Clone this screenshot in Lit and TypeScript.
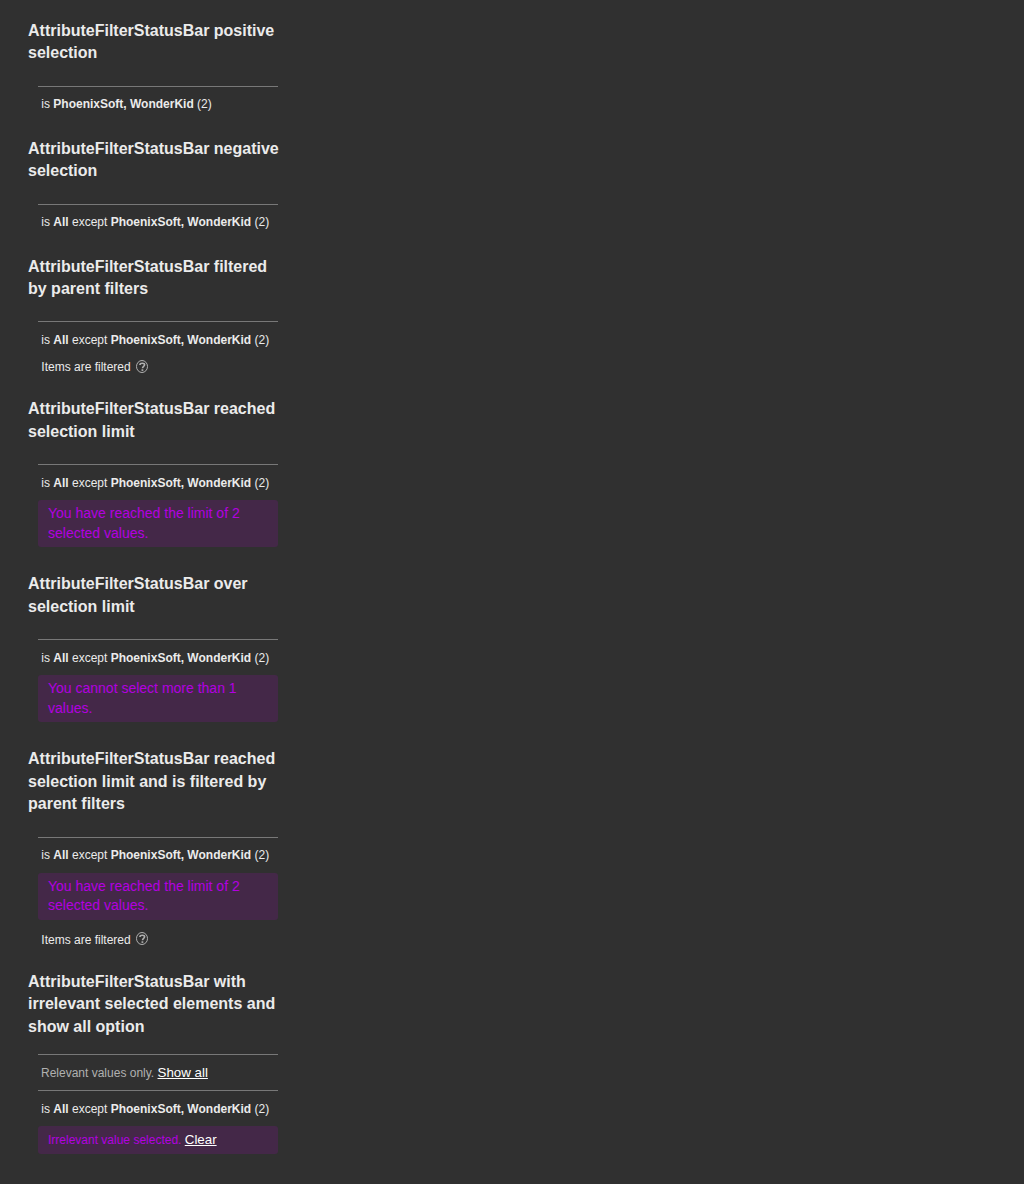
import { LitElement, html, css, svg, nothing } from "lit";
import { customElement, property } from "lit/decorators.js";

interface StatusExample {
  title: string;
  negative?: boolean;
  limit?: string;
  filtered?: boolean;
  irrelevant?: boolean;
}

const EXAMPLES: StatusExample[] = [
  { title: "AttributeFilterStatusBar positive selection" },
  { title: "AttributeFilterStatusBar negative selection", negative: true },
  { title: "AttributeFilterStatusBar filtered by parent filters", negative: true, filtered: true },
  {
    title: "AttributeFilterStatusBar reached selection limit",
    negative: true,
    limit: "You have reached the limit of 2 selected values.",
  },
  {
    title: "AttributeFilterStatusBar over selection limit",
    negative: true,
    limit: "You cannot select more than 1 values.",
  },
  {
    title: "AttributeFilterStatusBar reached selection limit and is filtered by parent filters",
    negative: true,
    limit: "You have reached the limit of 2 selected values.",
    filtered: true,
  },
  {
    title: "AttributeFilterStatusBar with irrelevant selected elements and show all option",
    negative: true,
    irrelevant: true,
  },
];

const helpIcon = svg`
  <ellipse cx="6" cy="6.5" rx="5.5" ry="6" stroke-width="1" />
  <path d="M3.9 5C3.9 3.7 4.8 3.2 6.2 3.2C7.7 3.2 8.6 3.8 8.6 4.8C8.6 6.3 6.5 6.4 6.5 8.2" stroke-width="1.6" />
  <path d="M6.4 9.3V10.9" stroke-width="1.8" />
`;

@customElement("status-bar")
export class StatusBar extends LitElement {
  @property({ attribute: false }) example!: StatusExample;

  static styles = css`
    :host {
      display: block;
      padding: 0 10px;
    }
    .row {
      box-sizing: border-box;
      height: 36px;
      padding: 8.6px 0 0 3.33px;
      border-top: 1px solid #787878;
      font-size: 12px;
      line-height: 18px;
      white-space: nowrap;
    }
    .muted {
      padding-left: 3px;
      color: #b0b0b0;
    }
    .message {
      box-sizing: border-box;
      margin-bottom: 10px;
      padding: 4px 10px;
      border-radius: 3px;
      background: #442848;
      color: #b300e0;
      font-size: 14px;
      line-height: 19.6px;
    }
    .single {
      height: 28px;
    }
    .small {
      font-size: 12px;
    }
    .link {
      padding: 0;
      border: 0;
      background: none;
      color: #fff;
      font: 13.333px "Liberation Sans", Arial, sans-serif;
      text-decoration: underline;
    }
    .filtered {
      display: flex;
      align-items: flex-start;
      gap: 5.3px;
      height: 25px;
      padding-left: 3.33px;
      font-size: 12px;
      line-height: 20px;
    }
    .icon {
      flex: none;
      width: 12px;
      height: 13px;
      margin-top: 2.4px;
      fill: none;
      stroke: #b0b0b0;
    }
  `;

  render() {
    const e = this.example;
    return html`
      ${e.irrelevant
        ? html`<div class="row muted">Relevant values only. <button class="link">Show all</button></div>`
        : nothing}
      <div class="row">
        is ${e.negative ? html`<b>All</b> except ` : nothing}<b>PhoenixSoft, WonderKid</b> (2)
      </div>
      ${e.limit ? html`<div class="message">${e.limit}</div>` : nothing}
      ${e.irrelevant
        ? html`<div class="message single"><span class="small">Irrelevant value selected. </span><button class="link">Clear</button></div>`
        : nothing}
      ${e.filtered
        ? html`<div class="filtered">
            <span>Items are filtered</span>
            <svg class="icon" viewBox="0 0 12 13">${helpIcon}</svg>
          </div>`
        : nothing}
    `;
  }
}

@customElement("app-root")
export class AppRoot extends LitElement {
  static styles = css`
    :host {
      display: block;
      box-sizing: border-box;
      min-height: 1184px;
      padding: 20px 28px 0;
      background: #303030;
      color: #ebebeb;
      font-family: "Liberation Sans", Arial, sans-serif;
    }
    .example {
      width: 260px;
      padding-bottom: 16px;
    }
    .example:last-child {
      padding-bottom: 0;
    }
    .title {
      margin: 0 0 21px;
      font-size: 16px;
      font-weight: 700;
      line-height: 22.4px;
    }
    .tight {
      margin-bottom: 16px;
    }
  `;

  render() {
    return EXAMPLES.map(
      (e) => html`<section class="example">
        <h4 class="title ${e.irrelevant ? "tight" : ""}">${e.title}</h4>
        <status-bar .example=${e}></status-bar>
      </section>`,
    );
  }
}
